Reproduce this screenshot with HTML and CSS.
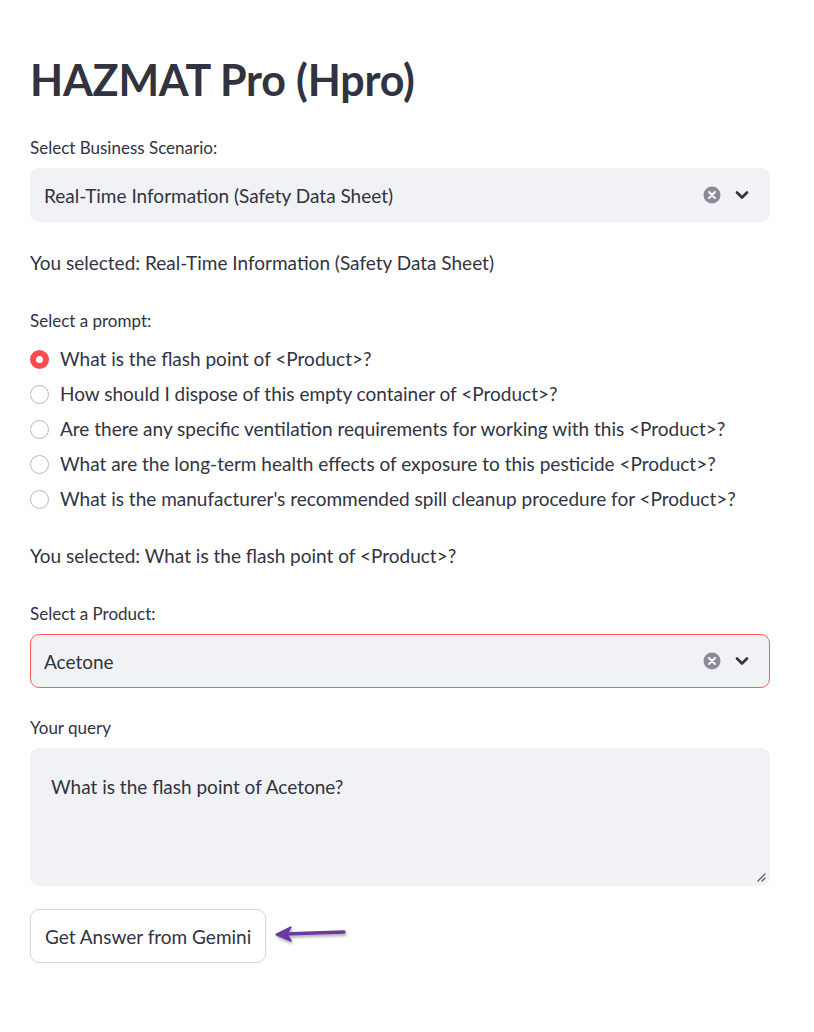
FILE: index.html
```html
<!DOCTYPE html>
<html>
<head>
<meta charset="utf-8">
<link rel="stylesheet" href="styles.css">
</head>
<body>
<main class="app">
  <h1 class="title">HAZMAT Pro (Hpro)</h1>

  <div class="field">
    <div class="label">Select Business Scenario:</div>
    <div class="select">
      <span class="select-value">Real-Time Information (Safety Data Sheet)</span>
      <span class="select-icons">
        <svg class="clear" width="18" height="18" viewBox="0 0 18 18"><circle cx="9" cy="9" r="8.5" fill="#8a8b96"/><path d="M6 6 L12 12 M12 6 L6 12" stroke="#fff" stroke-width="2" stroke-linecap="round"/></svg>
        <svg class="chev" width="14" height="10" viewBox="0 0 14 10"><path d="M2 2.5 L7 7.5 L12 2.5" fill="none" stroke="#31333f" stroke-width="2.6" stroke-linecap="round" stroke-linejoin="round"/></svg>
      </span>
    </div>
  </div>

  <p class="text">You selected: Real-Time Information (Safety Data Sheet)</p>

  <div class="field">
    <div class="label">Select a prompt:</div>
    <div class="radios">
      <div class="radio checked"><span class="dot"></span><span>What is the flash point of &lt;Product&gt;?</span></div>
      <div class="radio"><span class="dot"></span><span>How should I dispose of this empty container of &lt;Product&gt;?</span></div>
      <div class="radio"><span class="dot"></span><span>Are there any specific ventilation requirements for working with this &lt;Product&gt;?</span></div>
      <div class="radio"><span class="dot"></span><span>What are the long-term health effects of exposure to this pesticide &lt;Product&gt;?</span></div>
      <div class="radio"><span class="dot"></span><span>What is the manufacturer's recommended spill cleanup procedure for &lt;Product&gt;?</span></div>
    </div>
  </div>

  <p class="text">You selected: What is the flash point of &lt;Product&gt;?</p>

  <div class="field">
    <div class="label">Select a Product:</div>
    <div class="select focused">
      <span class="select-value">Acetone</span>
      <span class="select-icons">
        <svg class="clear" width="18" height="18" viewBox="0 0 18 18"><circle cx="9" cy="9" r="8.5" fill="#8a8b96"/><path d="M6 6 L12 12 M12 6 L6 12" stroke="#fff" stroke-width="2" stroke-linecap="round"/></svg>
        <svg class="chev" width="14" height="10" viewBox="0 0 14 10"><path d="M2 2.5 L7 7.5 L12 2.5" fill="none" stroke="#31333f" stroke-width="2.6" stroke-linecap="round" stroke-linejoin="round"/></svg>
      </span>
    </div>
  </div>

  <div class="field spaced">
    <div class="label">Your query</div>
    <div class="textarea">
      <span>What is the flash point of Acetone?</span>
      <svg class="grip" width="10" height="10" viewBox="0 0 10 10"><path d="M9 2 L2 9 M9 6 L6 9" stroke="#555" stroke-width="1.2" stroke-linecap="round"/></svg>
    </div>
  </div>

  <div class="actions">
    <button class="btn">Get Answer from Gemini</button>
    <svg class="arrow" width="80" height="30" viewBox="0 0 80 30">
      <defs>
        <filter id="sh" x="-20%" y="-50%" width="140%" height="200%">
          <feDropShadow dx="1" dy="2" stdDeviation="1.5" flood-color="#000" flood-opacity="0.35"/>
        </filter>
      </defs>
      <g filter="url(#sh)">
        <path d="M12 13 L72 11" stroke="#6b3a9c" stroke-width="3.5" stroke-linecap="round" fill="none"/>
        <path d="M4 13.5 L19 6 L15 13.2 L19 20 Z" fill="#6b3a9c" stroke="#6b3a9c" stroke-width="1.5" stroke-linejoin="round"/>
      </g>
    </svg>
  </div>
</main>
</body>
</html>
```

FILE: styles.css
```css
* { box-sizing: border-box; }
html, body { margin: 0; padding: 0; background: #fff; }
body {
  font-family: "Lato", "Noto Sans", sans-serif;
  color: #31333f;
}
.app {
  width: 814px;
  padding: 50px 44px 0 30px;
}
.title {
  font-size: 43px;
  font-weight: 700;
  margin: 0 0 27px 0;
  line-height: 60px;
  letter-spacing: -0.2px;
}
.field { margin-bottom: 0; }
.field.spaced { margin-top: 29px; }
.label {
  font-size: 17px;
  line-height: 22px;
  margin-bottom: 9px;
}
.select {
  height: 54px;
  background: #f0f2f6;
  border-radius: 9px;
  border: 1px solid #f0f2f6;
  display: flex;
  align-items: center;
  justify-content: space-between;
  padding: 0 20px 0 13px;
}
.select.focused { border-color: #ff5c5c; }
.select-value { font-size: 19px; }
.select-icons { display: flex; align-items: center; gap: 14px; }
.text {
  font-size: 19px;
  margin: 28px 0 34px 0;
  line-height: 26px;
}
.radios { display: flex; flex-direction: column; gap: 9px; margin-top: 14px; padding-bottom: 3px; }
.radio {
  display: flex;
  align-items: center;
  gap: 11px;
  font-size: 19px;
  line-height: 26px;
}
.dot {
  width: 19px;
  height: 19px;
  border-radius: 50%;
  border: 1.5px solid #b8b9c0;
  background: #fff;
  flex: none;
}
.radio.checked .dot {
  border: 6px solid #ff4b4b;
  background: #fff;
}
.textarea {
  position: relative;
  height: 138px;
  background: #f0f2f6;
  border-radius: 9px;
  padding: 26px 21px;
  font-size: 19px;
  line-height: 26px;
}
.grip { position: absolute; right: 4px; bottom: 4px; }
.actions {
  display: flex;
  align-items: center;
  gap: 6px;
  margin-top: 23px;
}
.btn {
  font-family: inherit;
  font-size: 19px;
  color: #31333f;
  background: #fff;
  border: 1px solid #d6d6d9;
  border-radius: 9px;
  height: 54px;
  padding: 0 14px;
}
.arrow { margin-left: 0; }
```
